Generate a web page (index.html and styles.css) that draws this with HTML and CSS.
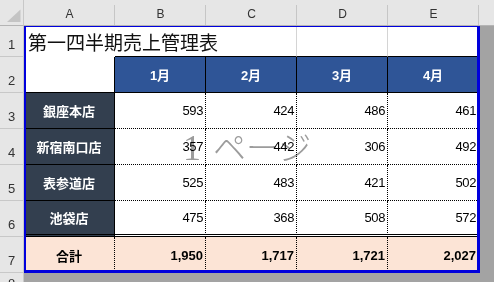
FILE: index.html
```html
<!DOCTYPE html>
<html lang="ja">
<head>
<meta charset="utf-8">
<title>第一四半期売上管理表</title>
<link rel="stylesheet" href="styles.css">
</head>
<body>
<div class="sheet">
  <div class="corner">
    <svg width="24" height="26" viewBox="0 0 24 26"><polygon points="20.5,9.5 20.5,22 7,22" fill="#c4c4c4"/></svg>
  </div>
  <div class="colheads">
    <div class="ch">A</div>
    <div class="ch">B</div>
    <div class="ch">C</div>
    <div class="ch">D</div>
    <div class="ch">E</div>
    <div class="ch filler"></div>
  </div>
  <div class="rowheads">
    <div class="rh r1">1</div>
    <div class="rh">2</div>
    <div class="rh">3</div>
    <div class="rh">4</div>
    <div class="rh">5</div>
    <div class="rh">6</div>
    <div class="rh">7</div>
    <div class="rh r8">8</div>
  </div>
  <div class="area">
    <div class="grid">
      <div class="c title">第一四半期売上管理表</div>
      <div class="c top"></div>
      <div class="c top gl"></div>
      <div class="c top gl"></div>
      <div class="c top gl"></div>

      <div class="c blank"></div>
      <div class="c mh">1月</div>
      <div class="c mh">2月</div>
      <div class="c mh">3月</div>
      <div class="c mh">4月</div>

      <div class="c store">銀座本店</div>
      <div class="c num">593</div>
      <div class="c num">424</div>
      <div class="c num">486</div>
      <div class="c num">461</div>

      <div class="c store">新宿南口店</div>
      <div class="c num">357</div>
      <div class="c num">442</div>
      <div class="c num">306</div>
      <div class="c num">492</div>

      <div class="c store">表参道店</div>
      <div class="c num">525</div>
      <div class="c num">483</div>
      <div class="c num">421</div>
      <div class="c num">502</div>

      <div class="c store last">池袋店</div>
      <div class="c num last">475</div>
      <div class="c num last">368</div>
      <div class="c num last">508</div>
      <div class="c num last">572</div>

      <div class="c tot label">合計</div>
      <div class="c tot num">1,950</div>
      <div class="c tot num">1,717</div>
      <div class="c tot num">1,721</div>
      <div class="c tot num">2,027</div>
    </div>
    <div class="watermark"><span class="wm-num">1</span><span class="wm-kana">ページ</span></div>
    <div class="printarea"></div>
  </div>
</div>
</body>
</html>
```

FILE: styles.css
```css
html, body {
  margin: 0;
  padding: 0;
}

body {
  width: 494px;
  height: 282px;
  overflow: hidden;
  background: #a3a3a3;
  font-family: "Liberation Sans", "Noto Sans CJK JP", sans-serif;
}

.sheet {
  display: grid;
  grid-template-columns: 24px 470px;
  grid-template-rows: 26px 256px;
  width: 494px;
  height: 282px;
}

.corner {
  background: #e6e6e6;
  box-sizing: border-box;
  border-right: 1px solid #c8c8c8;
  border-bottom: 1px solid #b4b4b4;
}

.corner svg {
  display: block;
}

.colheads {
  display: flex;
  background: #e6e6e6;
  box-sizing: border-box;
  border-bottom: 1px solid #b4b4b4;
}

.ch {
  flex: none;
  width: 91px;
  box-sizing: border-box;
  display: flex;
  align-items: center;
  justify-content: center;
  padding-top: 3px;
  font-size: 12px;
  color: #333;
  background: linear-gradient(#c6c6c6, #c6c6c6) right bottom / 1px 20px no-repeat;
}

.ch.filler {
  width: 15px;
  background: none;
}

.rowheads {
  display: flex;
  flex-direction: column;
  background: #e6e6e6;
  box-sizing: border-box;
  border-right: 1px solid #c8c8c8;
}

.rh {
  flex: none;
  height: 36px;
  box-sizing: border-box;
  border-bottom: 1px solid #c8c8c8;
  display: flex;
  align-items: flex-end;
  justify-content: center;
  padding-bottom: 4px;
  font-size: 13px;
  line-height: 14px;
  color: #333;
}

.rh.r1 {
  height: 31px;
}

.rh.r8 {
  height: 22px;
  border-bottom: none;
}

.area {
  position: relative;
  background: #a3a3a3;
}

.grid {
  display: grid;
  grid-template-columns: repeat(5, 91px);
  grid-template-rows: 31px repeat(6, 36px);
  width: 455px;
  background: #fff;
}

.c {
  box-sizing: border-box;
  display: flex;
  align-items: center;
  min-width: 0;
  font-size: 13px;
  color: #000;
}

.title {
  white-space: nowrap;
  overflow: visible;
  padding-left: 4px;
  padding-bottom: 1px;
  font-family: "Noto Sans CJK JP", sans-serif;
  font-size: 19px;
  color: #111;
  position: relative;
  z-index: 1;
}

.top {
  border-bottom: 1px solid #000;
}

.top.gl {
  border-right: 1px solid #d4d4d4;
}

.blank {
  border-right: 1px solid #000;
  border-bottom: 1px solid #000;
}

.mh {
  background: #2f5597;
  border-right: 1px solid #000;
  border-bottom: 1px solid #000;
  justify-content: center;
  color: #fff;
  font-weight: bold;
  font-family: "Liberation Sans", "Noto Sans CJK JP", sans-serif;
  font-size: 13px;
}

.store {
  background: #333f4f;
  border-right: 1px solid #000;
  border-bottom: 1px solid #000;
  justify-content: center;
  color: #fff;
  font-weight: bold;
  font-family: "Noto Sans CJK JP", sans-serif;
}

.num {
  justify-content: flex-end;
  padding-right: 2px;
  border-right: 1px dotted #000;
  border-bottom: 1px dotted #000;
  letter-spacing: -0.4px;
}

.last {
  border-bottom: 3px double #000;
}

.tot {
  background: #fce4d6;
  font-weight: bold;
  border-bottom: none;
  border-right: 1px dotted #000;
}

.tot.num {
  letter-spacing: 0;
}

.label {
  justify-content: center;
  font-family: "Noto Sans CJK JP", sans-serif;
}

.watermark {
  position: absolute;
  left: 159px;
  top: 104px;
  display: flex;
  align-items: baseline;
  color: #9c9c9c;
  mix-blend-mode: multiply;
  pointer-events: none;
  z-index: 2;
}

.wm-num {
  font-family: "Liberation Serif", serif;
  font-size: 36px;
  line-height: 1;
}

.wm-kana {
  margin-left: 12px;
  font-family: "Noto Sans CJK JP", sans-serif;
  font-weight: 300;
  font-size: 33px;
  line-height: 1;
}

.printarea {
  position: absolute;
  left: 0;
  top: 0;
  width: 456px;
  height: 247px;
  box-sizing: border-box;
  border-style: solid;
  border-color: #0000dc;
  border-width: 1px 3px 3px 2px;
  pointer-events: none;
  z-index: 3;
}
```
